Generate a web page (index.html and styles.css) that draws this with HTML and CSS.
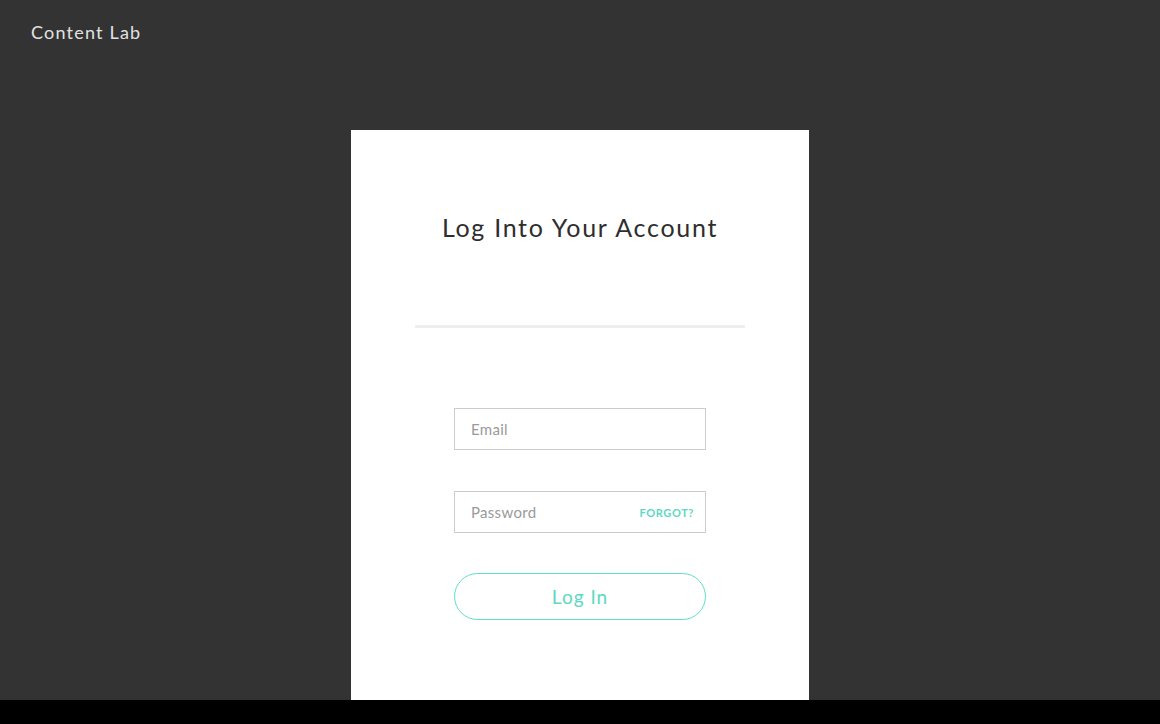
FILE: index.html
```html
<!DOCTYPE html>
<html lang="en">
<head>
<meta charset="utf-8">
<title>Content Lab – Log In</title>
<link rel="stylesheet" href="styles.css">
</head>
<body>
<div class="page">
  <header class="topbar">
    <span class="brand">Content Lab</span>
  </header>
  <main class="stage">
    <section class="card">
      <h1 class="title">Log Into Your Account</h1>
      <hr class="divider">
      <form class="form">
        <div class="field">
          <input class="input" type="email" placeholder="Email">
        </div>
        <div class="field">
          <input class="input" type="password" placeholder="Password">
          <a class="forgot" href="#">FORGOT?</a>
        </div>
        <button class="login" type="button">Log In</button>
      </form>
    </section>
  </main>
</div>
</body>
</html>
```

FILE: styles.css
```css
html, body {
  margin: 0;
  padding: 0;
  background: #000;
  height: 100%;
}
body {
  font-family: "Lato", "Open Sans", sans-serif;
}
.page {
  height: 700px;
  background: #333333;
  overflow: hidden;
  display: flex;
  flex-direction: column;
}
.topbar {
  flex-shrink: 0;
  height: 66px;
  padding: 21px 0 0 31px;
  box-sizing: border-box;
}
.brand {
  color: #e2e2e2;
  font-size: 18px;
  letter-spacing: 1.2px;
}
.stage {
  flex-shrink: 0;
  display: flex;
  justify-content: center;
  padding-top: 64px;
}
.card {
  flex-shrink: 0;
  width: 458px;
  height: 640px;
  background: #ffffff;
  display: flex;
  flex-direction: column;
  align-items: center;
  box-sizing: border-box;
  padding-top: 81px;
}
.title {
  margin: 0;
  font-weight: 400;
  font-size: 25px;
  letter-spacing: 1.7px;
  color: #2e2e2e;
  line-height: 32px;
}
.divider {
  width: 330px;
  height: 3px;
  border: 0;
  background: #eeeeee;
  margin: 82px 0 0 0;
}
.form {
  margin-top: 80px;
  display: flex;
  flex-direction: column;
  align-items: center;
  gap: 41px;
}
.field {
  position: relative;
  width: 252px;
  height: 42px;
}
.input {
  width: 100%;
  height: 100%;
  box-sizing: border-box;
  border: 1px solid #cccccc;
  border-radius: 0;
  padding: 0 16px;
  font-family: "Lato", "Open Sans", sans-serif;
  font-size: 15px;
  color: #333;
  outline: none;
  background: #fff;
}
.input::placeholder {
  color: #9a9a9a;
  letter-spacing: 0.3px;
}
.forgot {
  position: absolute;
  right: 12px;
  top: 50%;
  transform: translateY(-50%);
  color: #5cd9c0;
  font-size: 11px;
  font-weight: 700;
  letter-spacing: 0.6px;
  text-decoration: none;
}
.login {
  margin-top: -1px;
  width: 252px;
  height: 47px;
  border: 1px solid #5de0c7;
  border-radius: 24px;
  background: #fff;
  color: #5cd9c0;
  font-family: "Lato", "Open Sans", sans-serif;
  font-size: 19px;
  letter-spacing: 1px;
  cursor: pointer;
}
```
